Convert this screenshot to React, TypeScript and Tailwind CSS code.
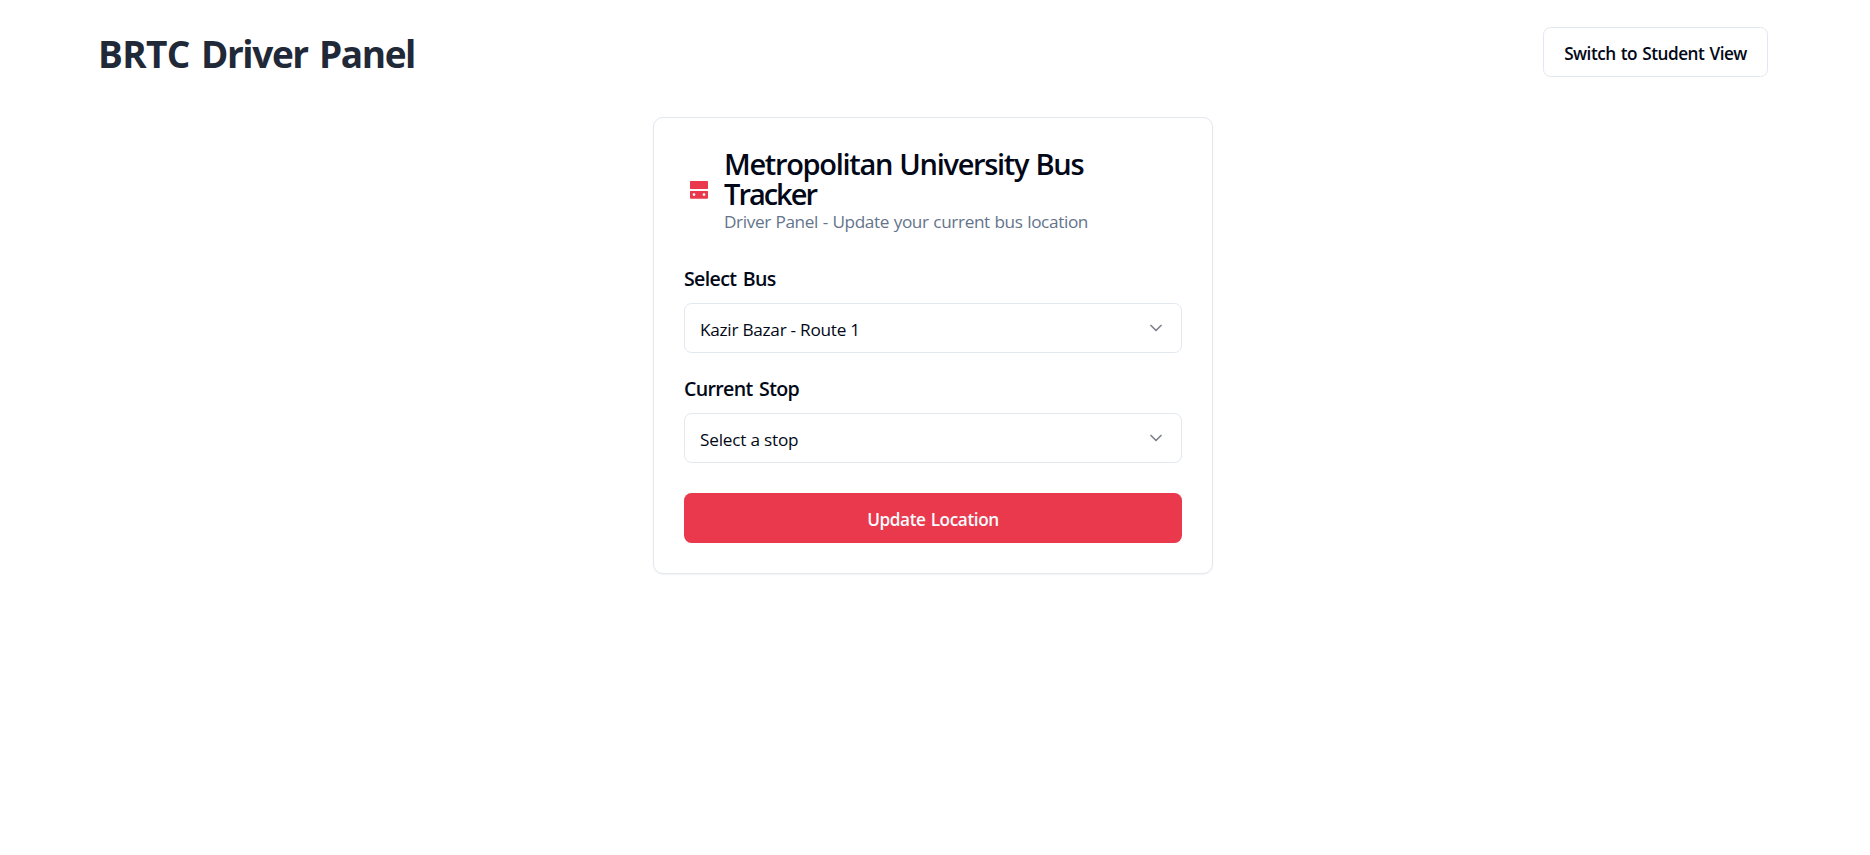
import React from "react";

function BusIcon() {
  return (
    <svg viewBox="0 0 30 30" className="h-[30px] w-[30px] shrink-0 text-[#ea384c]" fill="currentColor">
      <rect x="6" y="5" width="18" height="7.9" rx="0.6" />
      <path
        fillRule="evenodd"
        d="M6.6 15h16.8a.6.6 0 0 1 .6.6v6.2a1 1 0 0 1-1 1H7a1 1 0 0 1-1-1v-6.2a.6.6 0 0 1 .6-.6zM10 17.2a1.4 1.4 0 1 0 0 2.8 1.4 1.4 0 0 0 0-2.8zM20 17.2a1.4 1.4 0 1 0 0 2.8 1.4 1.4 0 0 0 0-2.8z"
      />
    </svg>
  );
}

function ChevronDown() {
  return (
    <svg
      viewBox="0 0 24 24"
      className="h-5 w-5 shrink-0 opacity-50"
      fill="none"
      stroke="currentColor"
      strokeWidth="2"
      strokeLinecap="round"
      strokeLinejoin="round"
    >
      <path d="m6 9 6 6 6-6" />
    </svg>
  );
}

function SelectField({ label, value, valueClass }: { label: string; value: string; valueClass: string }) {
  return (
    <div className="flex flex-col gap-2.5">
      <label className="pt-px text-[19.6px] leading-[29px] font-semibold tracking-[-0.034em] [word-spacing:2px]">{label}</label>
      <button
        type="button"
        className="flex h-[50px] w-full items-center justify-between rounded-[7.5px] border border-[#e2e8f0] bg-white px-[15px] text-[17.2px]"
      >
        <span className={`pt-0.5 leading-[25px] ${valueClass}`}>{value}</span>
        <ChevronDown />
      </button>
    </div>
  );
}

export default function App() {
  return (
    <div className="min-h-screen bg-white pt-[27px] pr-[102px] pl-[98px] font-['Open_Sans',sans-serif] text-[#020817]">
      <header className="mb-10 flex h-[50px] items-center justify-between">
        <h1 className="pt-0.5 text-[37px] leading-[45px] font-bold tracking-[-0.034em] text-[#1f2937] [word-spacing:3px]">
          <span className="tracking-[-0.018em]">BRTC</span> <span className="tracking-[-0.038em]">Driver Panel</span>
        </h1>
        <button
          type="button"
          className="flex h-[50px] w-[225px] items-center justify-center rounded-[7.5px] border border-[#e2e8f0] bg-white pt-[3px] text-[17.2px] font-semibold tracking-[-0.029em] [word-spacing:1.2px]"
        >
          Switch to Student View
        </button>
      </header>

      <main className="mx-auto w-[560px] rounded-[10px] border border-[#e2e8f0] bg-white p-[30px] shadow-[0_1px_2px_rgba(0,0,0,0.05)]">
        <div className="flex h-[85px] items-center gap-2.5">
          <BusIcon />
          <div>
            <h2 className="pt-px text-[29px] leading-[30px] font-semibold">
              <span className="block tracking-[-0.045em] [word-spacing:1px]">Metropolitan University Bus</span>
              <span className="block tracking-[-0.069em]">Tracker</span>
            </h2>
            <p className="text-[17.2px] leading-[25px] tracking-[-0.0215em] text-[#64748b] [word-spacing:0.5px]">
              Driver Panel - Update your current bus location
            </p>
          </div>
        </div>

        <div className="mt-[30px] flex flex-col gap-5">
          <SelectField label="Select Bus" value="Kazir Bazar - Route 1" valueClass="tracking-[-0.015em]" />
          <SelectField label="Current Stop" value="Select a stop" valueClass="tracking-[-0.012em]" />
        </div>
        <button
          type="button"
          className="mt-[30px] flex h-[50px] w-full items-center justify-center rounded-[7.5px] bg-[#ea384c] pt-[3px] text-[17.2px] font-semibold tracking-[-0.023em] text-[#f8fafc] [word-spacing:1px]"
        >
          Update Location
        </button>
      </main>
    </div>
  );
}
